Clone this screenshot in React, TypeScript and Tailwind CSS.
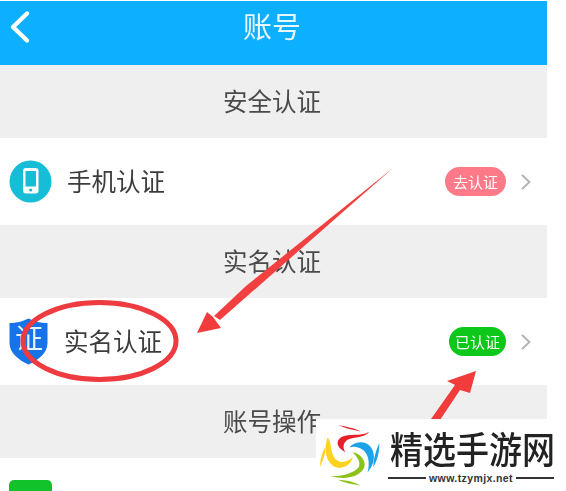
const cjk = { fontFamily: '"Noto Sans CJK SC", "Liberation Sans", sans-serif' };

function Section({ title }: { title: string }) {
  return (
    <div className="flex h-[73px] items-center justify-center bg-[#efefef] pb-[1px] pr-[3px] text-[24.5px] leading-none text-[#4a4a4a]">
      {title}
    </div>
  );
}

function Chevron() {
  return (
    <svg width="12" height="18" viewBox="0 0 12 18" fill="none" stroke="#b0b0b0" strokeWidth="1.8">
      <path d="M2 2l7.5 7L2 16" />
    </svg>
  );
}

function Row({ icon, label, gap, badge, badgeClass }: { icon: React.ReactNode; label: string; gap: string; badge: string; badgeClass: string }) {
  return (
    <div className="flex h-[87px] items-center bg-white pl-[9px] pr-[15px]">
      <div className="w-[43px] shrink-0">{icon}</div>
      <span className={`${gap} text-[24.5px] leading-none text-[#3c3c3c]`}>{label}</span>
      <span className={`${badgeClass} ml-auto flex h-[29px] items-center justify-center rounded-full text-[15px] leading-none text-white`}>{badge}</span>
      <span className="ml-[15px] flex w-[12px]"><Chevron /></span>
    </div>
  );
}

export default function App() {
  return (
    <div className="relative h-[491px] w-[566px] overflow-hidden bg-white" style={cjk}>
      <div className="w-[547px] pt-px blur-[0.5px]">
        <header className="relative flex h-[64px] items-center justify-center bg-[#0cb0ff] pb-[15px] pr-[3px] text-[29px] leading-none text-[#e8f6ff]">
          <svg className="absolute left-[9px] top-[9px]" width="22" height="34" viewBox="0 0 22 34" fill="none" stroke="white" strokeWidth="4.4" strokeLinecap="round" strokeLinejoin="round">
            <path d="M18 3.5L4 17l14 13.5" />
          </svg>
          账号
        </header>
        <Section title="安全认证" />
        <Row
          label="手机认证"
          gap="ml-[15px]"
          badge="去认证"
          badgeClass="translate-x-[1px] w-[61px] bg-[#ff7a88]"
          icon={
            <svg width="43" height="43" viewBox="0 0 43 43">
              <circle cx="21.5" cy="21.5" r="21" fill="#16bdd6" />
              <rect x="14" y="8" width="15.5" height="25.5" rx="3" fill="white" />
              <rect x="16.5" y="11" width="10.5" height="15.5" fill="#16bdd6" />
              <circle cx="21.7" cy="30" r="1.6" fill="#16bdd6" />
            </svg>
          }
        />
        <Section title="实名认证" />
        <Row
          label="实名认证"
          gap="ml-[12px]"
          badge="已认证"
          badgeClass="translate-x-[1px] w-[57px] bg-[#0ec71b]"
          icon={
            <svg width="39" height="47" viewBox="0 0 39 47">
              <path d="M0.5 5C8 5 13 3.5 19.5 0.5 26 3.5 31 5 38.5 5v20c0 10-9 17-19 21.5C9.5 42 0.5 35 0.5 25z" fill="#1773ea" />
              <text x="20" y="31" textAnchor="middle" fontSize="28" fill="#e4f3ff">证</text>
            </svg>
          }
        />
        <Section title="账号操作" />
        <div className="h-[33px] bg-white pl-[9px] pt-[22px]">
          <div className="h-[11px] w-[43px] rounded-t-[5px] bg-[#12c22a]" />
        </div>
      </div>

      <svg className="pointer-events-none absolute inset-0" width="566" height="491" viewBox="0 0 566 491" fill="none">
        <path d="M393 168L220 320l-6-4 32-30z" fill="#f24040" />
        <path d="M197 333l10-21 6 5 8 11z" fill="#f23c3c" />
        <ellipse cx="99.5" cy="341" rx="76.5" ry="38.5" stroke="#ee3b3f" strokeWidth="5" />
        <path d="M476 371l-6 22-10-3-22 33-7-4 24-34-8-4z" fill="#f23c3c" />
      </svg>

      <div className="absolute bottom-0 right-0 flex h-[72px] w-[250px] bg-white">
        <svg width="70" height="72" viewBox="0 0 210 216" fill="none" className="shrink-0">
          <path d="M160 38C130 55 100 40 75 55 58 68 62 85 88 100 80 85 80 72 95 62 115 52 145 58 160 38z" fill="#e8202a" />
          <path d="M68 17C90 25 115 25 135 38 110 30 88 30 68 17z" fill="#e8202a" />
          <path d="M35 55C50 75 40 110 65 125 80 133 95 128 110 115 105 140 75 155 50 140 25 120 25 85 35 55z" fill="#ffd21f" />
          <path d="M28 85C30 105 20 125 12 145 12 120 18 100 28 85z" fill="#ffd21f" />
          <path d="M100 85C120 65 150 65 165 85 180 110 175 135 155 160 162 130 158 105 140 92 125 82 112 82 100 85z" fill="#1aa3e8" />
          <path d="M190 72C190 100 185 120 172 145 172 118 180 95 190 72z" fill="#1aa3e8" />
          <path d="M110 100C135 105 150 125 145 145 135 170 95 185 45 172 80 172 115 162 128 145 135 130 125 115 110 100z" fill="#8cc21a" />
          <path d="M65 182C90 182 115 188 135 200 110 195 85 192 65 182z" fill="#8cc21a" />
        </svg>
        <div className="ml-[2px] flex flex-col pt-[9px]">
          <span className="ml-[2px] origin-top scale-y-[1.12] whitespace-nowrap text-[33px] font-medium leading-[37px] text-[#222]">精选手游网</span>
          <div className="mt-[8px] flex w-[166px] items-center text-[10.5px] font-bold leading-none tracking-[0.4px] text-[#333]" style={{ fontFamily: '"Liberation Sans", sans-serif' }}>
            <span className="h-[2px] flex-1 bg-[#333]" />
            <span className="mx-[3px]">www.tzymjx.net</span>
            <span className="h-[2px] flex-1 bg-[#333]" />
          </div>
        </div>
      </div>
    </div>
  );
}
